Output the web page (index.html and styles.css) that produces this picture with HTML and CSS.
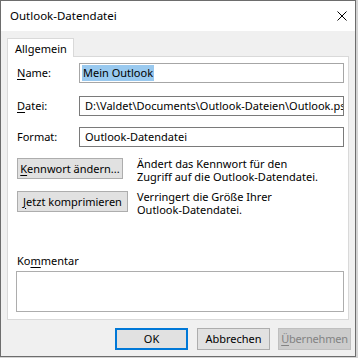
FILE: index.html
```html
<!DOCTYPE html>
<html lang="de">
<head>
<meta charset="utf-8">
<title>Outlook-Datendatei</title>
<link rel="stylesheet" href="styles.css">
</head>
<body>
<div class="window">
  <div class="titlebar">
    <span class="title">Outlook-Datendatei</span>
    <svg class="close" width="10" height="10" viewBox="0 0 10 10"><path d="M0.5 0.5 L9.5 9.5 M9.5 0.5 L0.5 9.5" stroke="#000" stroke-width="1" fill="none"/></svg>
  </div>
  <div class="content">
    <div class="tabs"><div class="tab">Allgemein</div></div>
    <div class="panel">
      <div class="field f-name">
        <span class="label"><u>N</u>ame:</span>
        <div class="input light"><span class="sel">Mein Outlook</span></div>
      </div>
      <div class="field f-file">
        <span class="label"><u>D</u>atei:</span>
        <div class="input dark"><span class="val">D:\Valdet\Documents\Outlook-Dateien\Outlook.pst</span></div>
      </div>
      <div class="field f-format">
        <span class="label">Format:</span>
        <div class="input dark"><span class="val">Outlook-Datendatei</span></div>
      </div>
      <div class="action a-pass">
        <div class="btn w-pass"><u>K</u>ennwort ändern...</div>
        <div class="desc">Ändert das Kennwort für den<br>Zugriff auf die Outlook-Datendatei.</div>
      </div>
      <div class="action a-comp">
        <div class="btn w-comp"><u>J</u>etzt komprimieren</div>
        <div class="desc">Verringert die Größe Ihrer<br>Outlook-Datendatei.</div>
      </div>
      <div class="comment">
        <span class="label">Ko<u>m</u>mentar</span>
        <div class="textarea"></div>
      </div>
    </div>
    <div class="buttons">
      <div class="btn dlg default">OK</div>
      <div class="btn dlg cancel">Abbrechen</div>
      <div class="btn dlg disabled"><u>Ü</u>bernehmen</div>
    </div>
  </div>
</div>
</body>
</html>
```

FILE: styles.css
```css
html, body {
  margin: 0;
  padding: 0;
}
body {
  background: #d4d4d4;
  font-family: "Noto Sans", "Open Sans", sans-serif;
  font-size: 11px;
  color: #000;
}
.window {
  width: 354px;
  height: 355px;
  border: 1px solid #6d6d6d;
  background: #f0f0f0;
  display: flex;
  flex-direction: column;
}
.titlebar {
  height: 30px;
  background: #fff;
  display: flex;
  align-items: center;
  padding-left: 9px;
  padding-right: 8px;
  flex: none;
}
.title {
  flex: 1;
  font-size: 11.5px;
  line-height: 16px;
  margin-top: -1px;
}
.close {
  display: block;
  margin-top: -1px;
}
.content {
  flex: 1;
  display: flex;
  flex-direction: column;
  padding: 7px 0 0 6px;
}
.tabs {
  display: flex;
  height: 18px;
}
.tab {
  position: relative;
  z-index: 1;
  height: 18px;
  padding: 0 7px 0 7px;
  width: 51px;
  border: 1px solid #d9d9d9;
  border-bottom: none;
  background: #fff;
  line-height: 19px;
  margin-bottom: -1px;
}
.panel {
  height: 262px;
  width: 327px;
  border: 1px solid #d9d9d9;
  background: #fff;
  display: flex;
  flex-direction: column;
  padding: 0 4px 0 9px;
}
.field {
  display: flex;
  align-items: center;
  height: 20px;
}
.f-name { margin-top: 6px; }
.f-file { margin-top: 13px; }
.f-format { margin-top: 11px; }
.label {
  width: 62px;
  flex: none;
  line-height: 16px;
}
.input {
  width: 263px;
  height: 18px;
  background: #fff;
  overflow: hidden;
  white-space: nowrap;
  display: flex;
  align-items: center;
  line-height: 16px;
}
.input.light { border: 1px solid #a6a6a6; }
.input.dark { border: 1px solid #7a7a7a; }
.sel {
  margin-left: 2px;
  padding: 0 1px;
  background: #99c9ef;
  line-height: 16px;
}
.val {
  margin-left: 5px;
}
.action {
  display: grid;
  grid-template-columns: 120px 1fr;
  align-items: start;
}
.a-pass { margin-top: 11px; }
.a-comp { margin-top: 8px; }
.btn {
  box-sizing: border-box;
  height: 21px;
  border: 1px solid #adadad;
  background: #e1e1e1;
  display: flex;
  align-items: center;
  justify-content: center;
  white-space: nowrap;
  line-height: 16px;
}
.w-pass { width: 106px; }
.w-comp { width: 111px; }
.desc {
  line-height: 13px;
  margin-top: -1px;
  white-space: nowrap;
}
.comment {
  margin-top: auto;
  margin-bottom: 7px;
  display: flex;
  flex-direction: column;
}
.comment .label {
  width: auto;
  margin-bottom: 2px;
}
.textarea {
  box-sizing: border-box;
  width: 328px;
  height: 41px;
  border: 1px solid #adadad;
  background: #fff;
  margin-left: -1px;
}
.buttons {
  display: flex;
  justify-content: flex-end;
  margin-top: 8px;
  padding-right: 4px;
}
.btn.dlg {
  width: 73px;
  height: 22px;
}
.btn.default {
  border: 2px solid #0078d7;
  margin-right: 9px;
}
.btn.cancel {
  margin-right: 8px;
}
.btn.disabled {
  background: #cccccc;
  border-color: #bfbfbf;
  color: #838383;
  letter-spacing: -0.2px;
}
u {
  text-decoration: underline;
  text-underline-offset: 2px;
}
```
